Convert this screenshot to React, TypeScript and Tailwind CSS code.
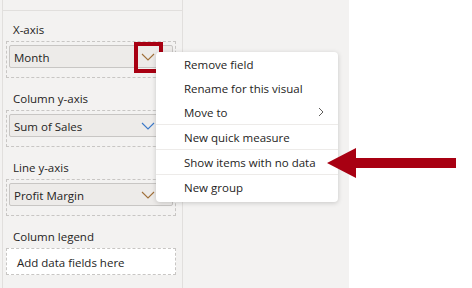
import { ReactNode } from 'react'

function Chevron({ color }: { color: string }) {
  return (
    <svg width="14" height="8" viewBox="0 0 14 8" className="shrink-0">
      <path d="M1 1 L7 7 L13 1" fill="none" stroke={color} strokeWidth="1.1" />
    </svg>
  )
}

function Pill({ name, chevron }: { name: string; chevron: string }) {
  return (
    <div className="flex h-[23px] items-center justify-between rounded-[2px] border border-[#c8c6c4] bg-[#edebe9] pl-[4px] pr-[17px]">
      <span className="pt-[2px]">{name}</span>
      <Chevron color={chevron} />
    </div>
  )
}

function Well({ label, children, first }: { label: string; children: ReactNode; first?: boolean }) {
  return (
    <div className={first ? 'mt-[6px]' : 'mt-[8px]'}>
      <div className="h-[20px] pl-[10px] pt-[3px] leading-[19px]">{label}</div>
      {children}
    </div>
  )
}

function MenuItem({ children, arrow }: { children: ReactNode; arrow?: boolean }) {
  return (
    <div className="flex h-[24px] items-center justify-between pl-[28px] pr-[14px]">
      <span className="pt-[1px]">{children}</span>
      {arrow && (
        <svg width="6" height="10" viewBox="0 0 6 10">
          <path d="M1 1 L5 5 L1 9" fill="none" stroke="#605e5c" strokeWidth="1" />
        </svg>
      )}
    </div>
  )
}

export default function App() {
  return (
    <div
      className="relative flex h-[288px] w-[472px] overflow-hidden bg-white text-[11.5px] text-[#252423]"
      style={{ fontFamily: '"Open Sans", "Noto Sans", sans-serif' }}
    >
      <div className="flex w-[349px] bg-[#f3f2f1] pl-[2px]">
        <div className="w-[181px] border-x border-[#e1dfdd]">
          <div className="h-[11px] border-b border-[#e1dfdd]" />

          <Well label="X-axis" first>
            <div className="mt-[4px] ml-[3px] w-[170px] border border-dashed border-[#c8c6c4] px-[2px] pt-[3px] pb-[9px]">
              <Pill name="Month" chevron="#a0703a" />
            </div>
          </Well>

          <Well label="Column y-axis">
            <div className="mt-[4px] ml-[3px] w-[170px] border border-dashed border-[#c8c6c4] px-[2px] pt-[3px] pb-[9px]">
              <Pill name="Sum of Sales" chevron="#3a78c8" />
            </div>
          </Well>

          <Well label="Line y-axis">
            <div className="mt-[4px] ml-[3px] w-[170px] border border-dashed border-[#c8c6c4] px-[2px] pt-[3px] pb-[9px]">
              <Pill name="Profit Margin" chevron="#a0703a" />
            </div>
          </Well>

          <Well label="Column legend">
            <div className="mt-[4px] ml-[3px] flex h-[27px] w-[170px] items-center border border-dashed border-[#c8c6c4] bg-white pl-[10px] pt-[2px]">
              Add data fields here
            </div>
          </Well>
        </div>
      </div>

      {/* highlight box on the Month chevron */}
      <div className="absolute left-[134px] top-[42px] h-[31px] w-[29px] border-[4px] border-[#a80012]" />

      {/* context menu */}
      <div className="absolute left-[156px] top-[52px] w-[182px] rounded-[4px] bg-white pb-[3px] shadow-[0_1px_5px_rgba(0,0,0,0.18)]">
        <MenuItem>Remove field</MenuItem>
        <MenuItem>Rename for this visual</MenuItem>
        <MenuItem arrow>Move to</MenuItem>
        <div className="h-px bg-[#edebe9]" />
        <MenuItem>New quick measure</MenuItem>
        <div className="h-px bg-[#edebe9]" />
        <MenuItem>Show items with no data</MenuItem>
        <div className="h-px bg-[#edebe9]" />
        <MenuItem>New group</MenuItem>
      </div>

      {/* callout arrow */}
      <svg className="absolute left-[325px] top-[146px]" width="134" height="34" viewBox="0 0 134 34">
        <polygon points="2,17 31,2 31,12 131,12 131,22 31,22 31,32" fill="#a80012" />
      </svg>
    </div>
  )
}
